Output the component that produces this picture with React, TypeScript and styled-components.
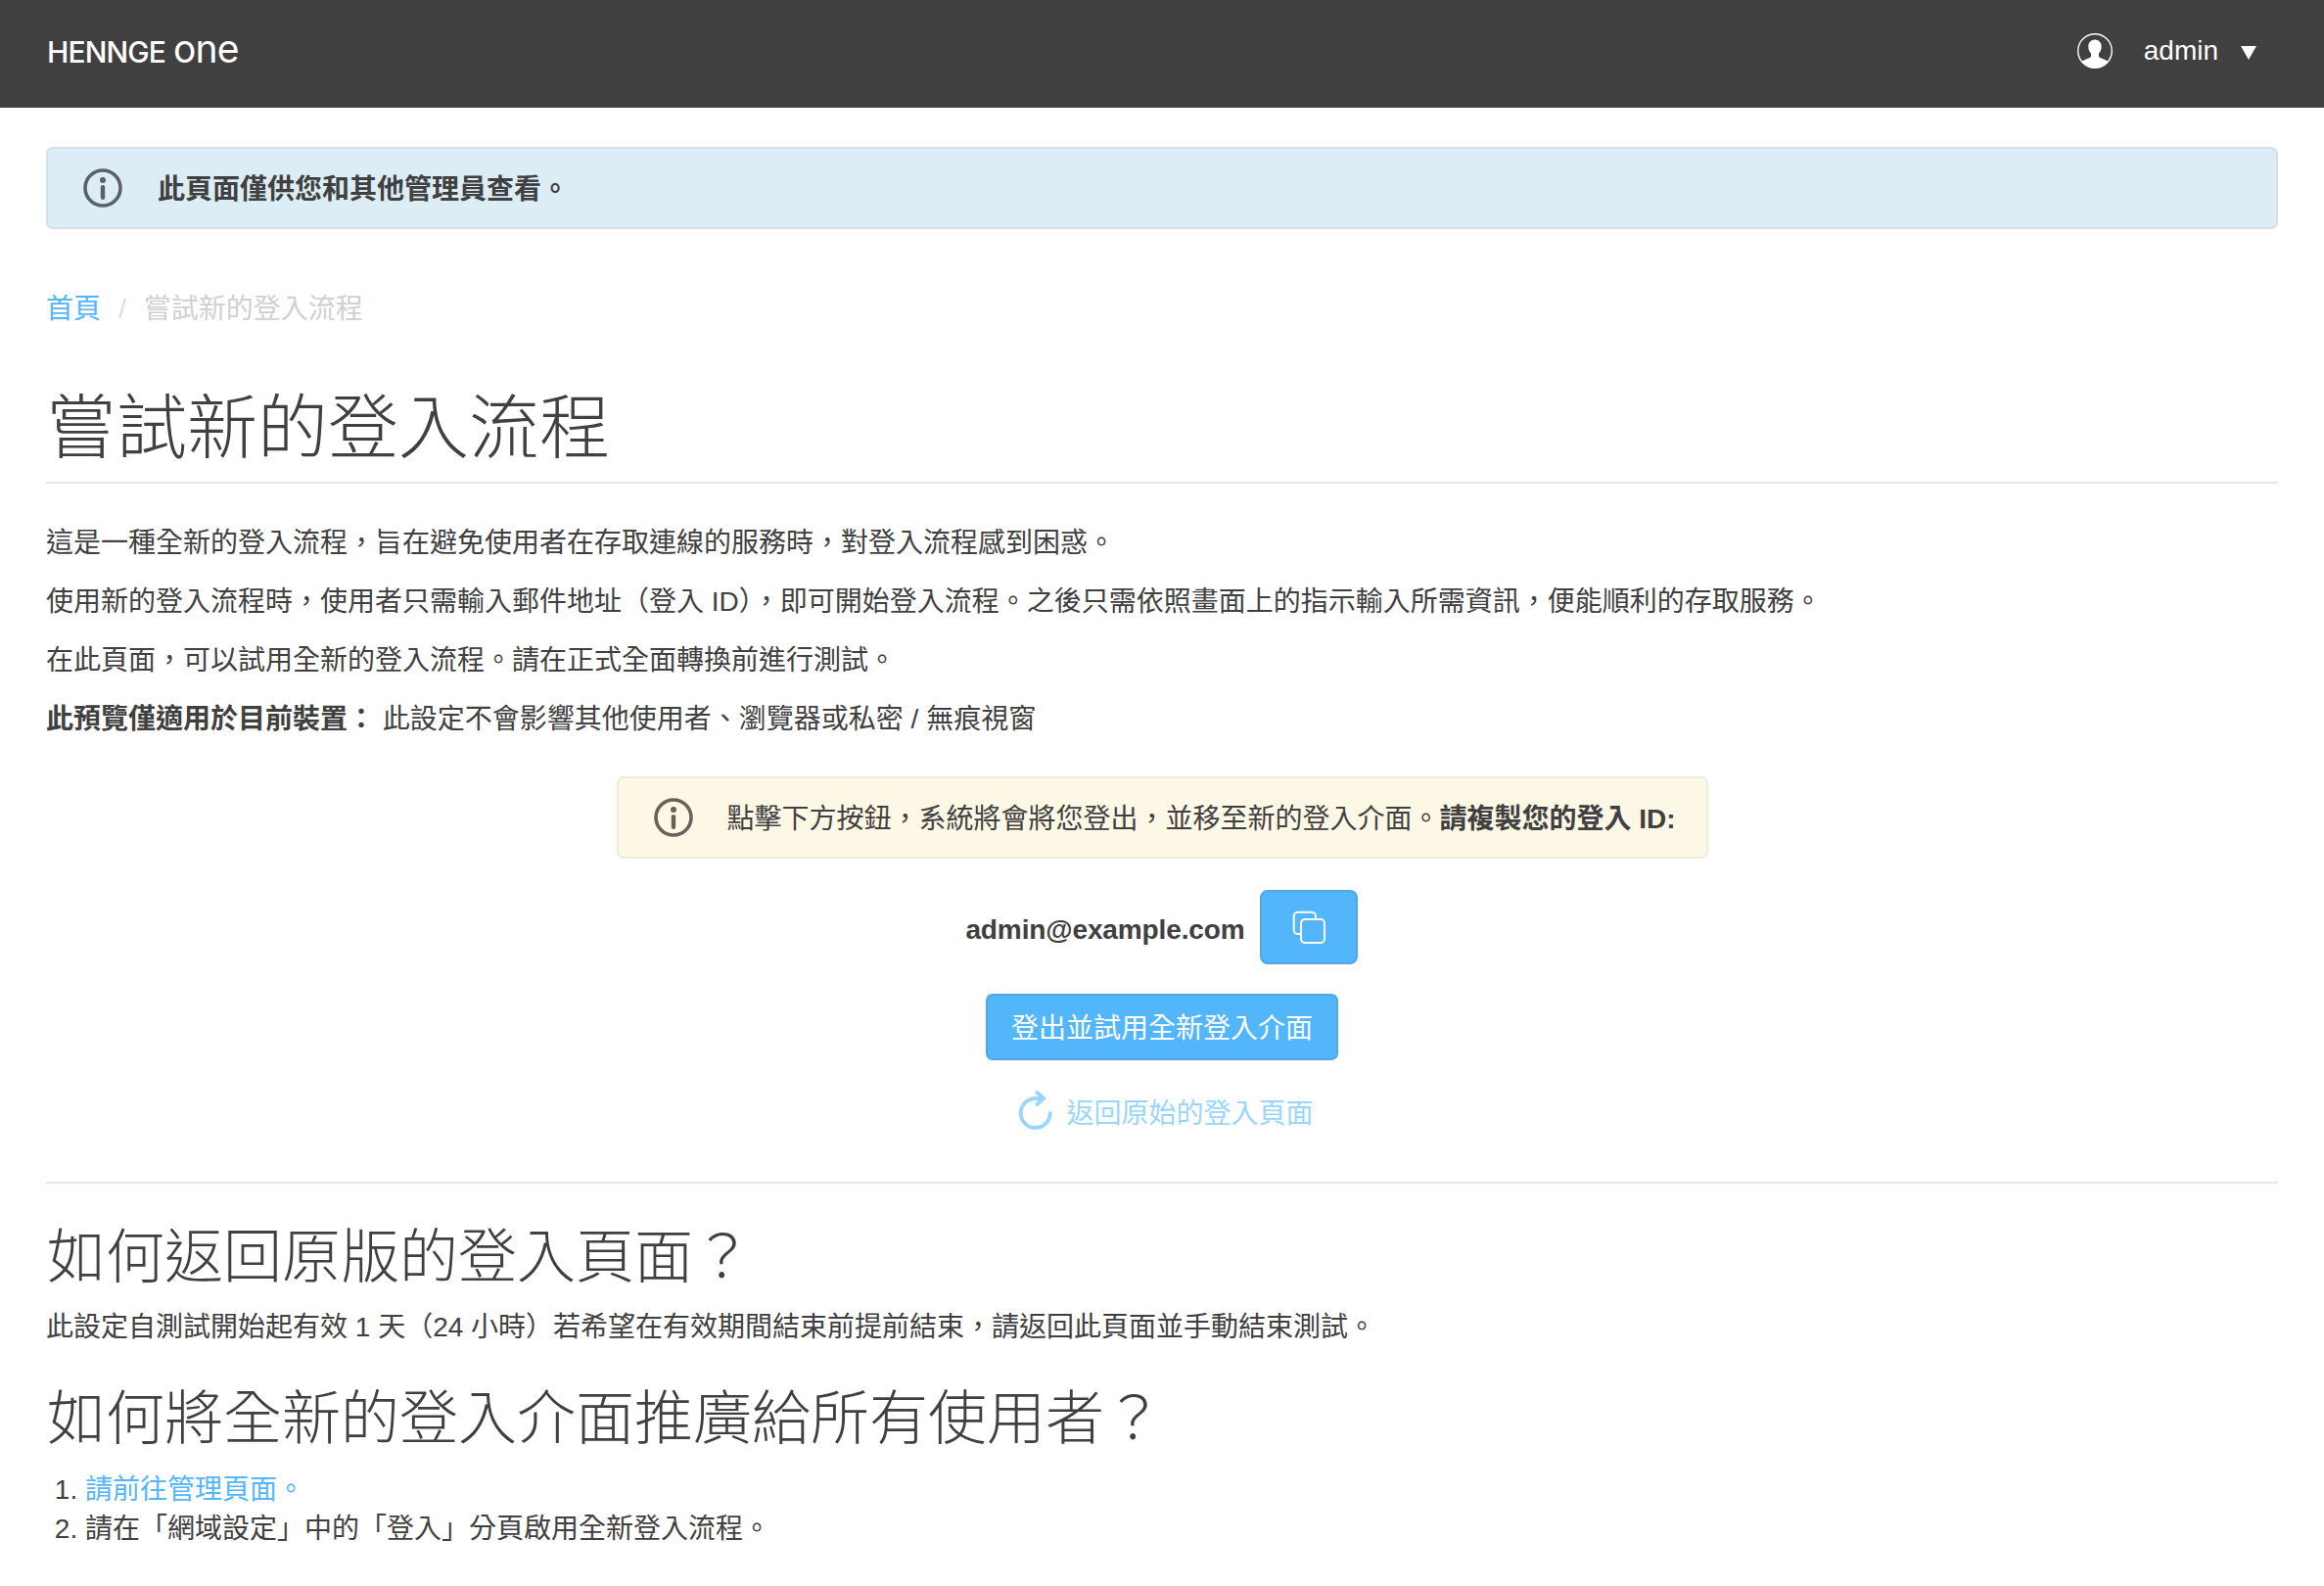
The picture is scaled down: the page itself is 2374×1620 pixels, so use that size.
import { FC } from 'react'
import styled, { createGlobalStyle } from 'styled-components'

const GlobalStyle = createGlobalStyle`
  html, body {
    margin: 0;
    padding: 0;
    background: #fff;
    color: #404040;
    font-family: 'Liberation Sans', 'Noto Sans CJK TC', sans-serif;
    font-size: 28px;
  }
  * { box-sizing: border-box; }
`

const Header = styled.header`
  height: 110px;
  background: #404040;
  display: flex;
  align-items: center;
  justify-content: space-between;
  padding: 0 69px 6px 48px;
  color: #fff;
`

const Logo = styled.div`
  display: flex;
  align-items: baseline;
  margin-top: -3px;
  font-family: 'Inter', sans-serif;
  color: #fff;
`

const LogoName = styled.span`
  font-size: 30px;
  font-weight: 500;
  letter-spacing: -0.9px;
`

const LogoOne = styled.span`
  font-size: 39px;
  font-weight: 400;
  letter-spacing: -0.8px;
  margin-left: 8px;
  line-height: 1;
`

const UserMenu = styled.div`
  display: flex;
  align-items: center;
`

const UserName = styled.span`
  font-size: 28px;
  margin: 0 23px 0 32px;
`

const Caret = styled.span`
  width: 0;
  height: 0;
  border-left: 8px solid transparent;
  border-right: 8px solid transparent;
  border-top: 14px solid #fff;
  margin-top: 4px;
`

const Main = styled.main`
  padding: 40px 47px 0;
`

const Alert = styled.div<{ $tone: 'info' | 'warning' }>`
  display: flex;
  align-items: center;
  height: 84px;
  border: 2px solid ${({ $tone }) => ($tone === 'info' ? '#d2e2ec' : '#f0ecd9')};
  border-radius: 7px;
  background: ${({ $tone }) => ($tone === 'info' ? '#dcedf5' : '#fdf7e5')};
  padding-left: 36px;
`

const InfoIconWrap = styled.span<{ $gap: number }>`
  display: flex;
  margin-right: ${({ $gap }) => $gap}px;
`

const AlertText = styled.span`
  margin-top: -2px;
`

const StrongText = styled.strong`
  font-weight: 700;
`

const Breadcrumb = styled.nav`
  display: flex;
  align-items: center;
  margin-top: 62px;
  height: 40px;
  line-height: 40px;
`

const CrumbLink = styled.a`
  color: #55b6f9;
`

const CrumbSep = styled.span`
  color: #dedede;
  margin: 0 18px 0 18px;
`

const CrumbCurrent = styled.span`
  color: #d0d0d0;
`

const Title = styled.h1`
  margin: 59px 0 0;
  font-size: 72px;
  font-weight: 300;
  line-height: 84px;
  padding: 0 0 13px 0;
  border-bottom: 2px solid #e6e6e6;
`

const Intro = styled.div`
  margin-top: 31px;
`

const Paragraph = styled.p`
  margin: 0;
  height: 60px;
  line-height: 60px;
`

const Center = styled.section`
  display: flex;
  flex-direction: column;
  align-items: center;
`

const NoticeBox = styled(Alert)`
  width: 1115px;
  margin-top: 28px;
`

const CopyRow = styled.div`
  display: flex;
  align-items: center;
  margin: 32px 1px 0 0;
  height: 76px;
`

const Email = styled.span`
  font-weight: 700;
  letter-spacing: -0.12px;
  margin: 6px 15px 0 0;
`

const CopyButton = styled.button`
  width: 100px;
  height: 76px;
  background: #54b6fa;
  border: 2px solid #4ea8e8;
  border-radius: 8px;
  display: flex;
  align-items: center;
  justify-content: center;
  padding: 0;
`

const PrimaryButton = styled.button`
  margin-top: 30px;
  width: 360px;
  height: 68px;
  background: #54b6fa;
  border: 2px solid #4ea8e8;
  border-radius: 7px;
  color: #fff;
  font-family: inherit;
  font-size: 28px;
  padding: 0 0 2px;
`

const BackLink = styled.a`
  display: flex;
  align-items: center;
  margin: 30px 0 0 8px;
  height: 44px;
  color: #9ad6fb;
`

const BackIcon = styled.span`
  display: flex;
  margin-right: 13px;
`

const Divider = styled.hr`
  border: 0;
  border-top: 2px solid #e6e6e6;
  margin: 50px 0 0;
`

const SubTitle = styled.h2<{ $top: number }>`
  margin: ${({ $top }) => $top}px 0 0;
  padding-left: 1px;
  font-size: 60px;
  font-weight: 300;
  line-height: 72px;
`

const PlainText = styled.p`
  margin: 15px 0 0;
  line-height: 40px;
`

const Steps = styled.ol`
  margin: 16px 0 0;
  padding-left: 40px;
  line-height: 40px;
`

const StepLink = styled.a`
  color: #55b6f9;
`

const InfoIcon: FC<{ color: string }> = ({ color }) => (
  <svg width="40" height="40" viewBox="0 0 40 40" fill="none">
    <circle cx="20" cy="20" r="18" stroke={color} strokeWidth="3.6" />
    <circle cx="20" cy="12" r="3" fill={color} />
    <rect x="17.8" y="17" width="4.4" height="15" rx="2.2" fill={color} />
  </svg>
)

const UserIcon: FC = () => (
  <svg width="36" height="36" viewBox="0 0 36 36" fill="none">
    <defs>
      <clipPath id="userClip">
        <circle cx="18" cy="18" r="17.3" />
      </clipPath>
    </defs>
    <g clipPath="url(#userClip)" fill="#fff">
      <path d="M18 6.500c-4 0-6.700 3-6.700 7 0 3 1.100 5.600 2.800 7.300v2.200c0 1.300-1 2-2.500 2.600-2.800 1-6 2-8 4.400V38h28.800v-8c-2-2.400-5.200-3.400-8-4.400-1.500-.6-2.500-1.300-2.500-2.600v-2.200c1.700-1.700 2.800-4.300 2.800-7.300 0-4-2.700-7-6.700-7z" />
    </g>
    <circle cx="18" cy="18" r="17.3" stroke="#fff" strokeWidth="1.4" />
  </svg>
)

const CopyIcon: FC = () => (
  <svg width="34" height="34" viewBox="0 0 34 34" fill="none" stroke="#fff" strokeWidth="2">
    <path d="M9 24H5.700a4 4 0 0 1-4-4V5.700a4 4 0 0 1 4-4H20a4 4 0 0 1 4 4V9" />
    <rect x="9" y="9" width="24" height="24" rx="4" />
  </svg>
)

const RefreshIcon: FC = () => (
  <svg width="36" height="42" viewBox="0 0 36 42" fill="none" stroke="#9ad6fb" strokeWidth="3.8" strokeLinecap="round" strokeLinejoin="round">
    <path d="M32.700 23A15 15 0 1 1 18 8H26" />
    <path d="M19.500 2L26 8L19.500 14" />
  </svg>
)

export default function App() {
  return (
    <>
      <GlobalStyle />
      <Header>
        <Logo>
          <LogoName>HENNGE</LogoName>
          <LogoOne>one</LogoOne>
        </Logo>
        <UserMenu>
          <UserIcon />
          <UserName>admin</UserName>
          <Caret />
        </UserMenu>
      </Header>
      <Main>
        <Alert $tone="info">
          <InfoIconWrap $gap={36}>
            <InfoIcon color="#5b6165" />
          </InfoIconWrap>
          <AlertText>
            <StrongText>此頁面僅供您和其他管理員查看。</StrongText>
          </AlertText>
        </Alert>
        <Breadcrumb>
          <CrumbLink>首頁</CrumbLink>
          <CrumbSep>/</CrumbSep>
          <CrumbCurrent>嘗試新的登入流程</CrumbCurrent>
        </Breadcrumb>
        <Title>嘗試新的登入流程</Title>
        <Intro>
          <Paragraph>這是一種全新的登入流程，旨在避免使用者在存取連線的服務時，對登入流程感到困惑。</Paragraph>
          <Paragraph>使用新的登入流程時，使用者只需輸入郵件地址（登入 ID），即可開始登入流程。之後只需依照畫面上的指示輸入所需資訊，便能順利的存取服務。</Paragraph>
          <Paragraph>在此頁面，可以試用全新的登入流程。請在正式全面轉換前進行測試。</Paragraph>
          <Paragraph>
            <StrongText>此預覽僅適用於目前裝置：</StrongText> 此設定不會影響其他使用者、瀏覽器或私密 / 無痕視窗
          </Paragraph>
        </Intro>
        <Center>
          <NoticeBox $tone="warning">
            <InfoIconWrap $gap={35}>
              <InfoIcon color="#67635a" />
            </InfoIconWrap>
            <AlertText>
              點擊下方按鈕，系統將會將您登出，並移至新的登入介面。<StrongText>請複製您的登入 ID:</StrongText>
            </AlertText>
          </NoticeBox>
          <CopyRow>
            <Email>admin@example.com</Email>
            <CopyButton aria-label="copy">
              <CopyIcon />
            </CopyButton>
          </CopyRow>
          <PrimaryButton>登出並試用全新登入介面</PrimaryButton>
          <BackLink>
            <BackIcon>
              <RefreshIcon />
            </BackIcon>
            返回原始的登入頁面
          </BackLink>
        </Center>
        <Divider />
        <SubTitle $top={40}>如何返回原版的登入頁面？</SubTitle>
        <PlainText>此設定自測試開始起有效 1 天（24 小時）若希望在有效期間結束前提前結束，請返回此頁面並手動結束測試。</PlainText>
        <SubTitle $top={38}>如何將全新的登入介面推廣給所有使用者？</SubTitle>
        <Steps>
          <li>
            <StepLink>請前往管理頁面。</StepLink>
          </li>
          <li>請在「網域設定」中的「登入」分頁啟用全新登入流程。</li>
        </Steps>
      </Main>
    </>
  )
}
